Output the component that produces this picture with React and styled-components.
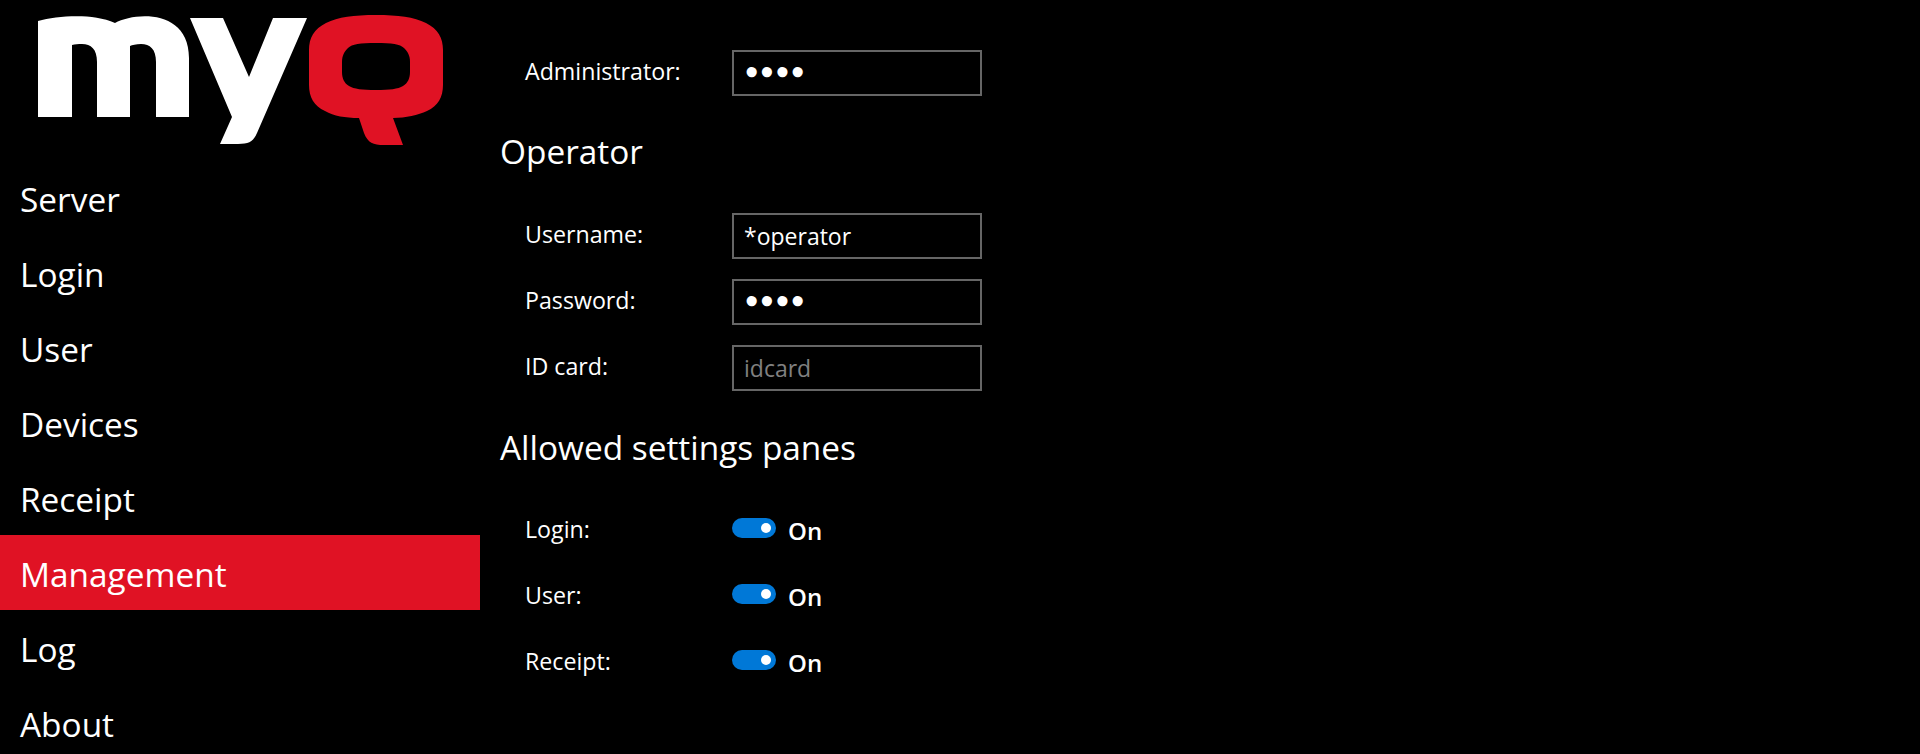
import styled, { createGlobalStyle } from "styled-components";

const GlobalStyle = createGlobalStyle`
  html, body {
    margin: 0;
    height: 100%;
    overflow: hidden;
    background: #000;
    color: #fff;
    font-family: "Open Sans", "Noto Sans", sans-serif;
  }
`;

const Page = styled.div`
  display: flex;
  width: 1920px;
  height: 754px;
  overflow: hidden;
  background: #000;
`;

const Sidebar = styled.aside`
  width: 480px;
  flex-shrink: 0;
`;

const LogoBox = styled.div`
  height: 160px;
`;

const NavItem = styled.div`
  box-sizing: border-box;
  height: 75px;
  padding: 3px 0 0 20px;
  display: flex;
  align-items: center;
  font-size: 33.4px;
  background: ${(p) => (p.$active ? "#e01224" : "transparent")};
`;

const Main = styled.main`
  flex: 1;
  padding: 50px 0 0 20px;
`;

const Heading = styled.h2`
  margin: 0;
  height: 52px;
  display: flex;
  align-items: center;
  font-size: 33.4px;
  font-weight: 400;
`;

const OperatorHeading = styled(Heading)`
  margin: 0 0 36px;
  padding-top: 9px;
`;

const PanesHeading = styled(Heading)`
  margin: 0 0 35px;
  padding-top: 10px;
`;

const Row = styled.div`
  display: grid;
  grid-template-columns: 207px 250px;
  height: 46px;
  margin-bottom: 20px;
  padding-left: 25px;
  align-items: center;
`;

const ToggleRow = styled(Row)`
  grid-template-columns: 207px auto;
`;

const Label = styled.label`
  font-size: 23.2px;
  margin-top: -4px;
`;

const Field = styled.input`
  box-sizing: border-box;
  width: 250px;
  height: 46px;
  padding: 0 10px;
  border: 2px solid #666;
  background: #000;
  color: #fff;
  font-family: inherit;
  font-size: 23px;
  outline: none;

  &[type="password"] {
    font-family: "DejaVu Sans", sans-serif;
    font-size: 26px;
    -webkit-text-stroke: 2.5px #fff;
  }

  &::placeholder {
    color: #808080;
    opacity: 1;
  }
`;

const ToggleWrap = styled.div`
  display: flex;
  align-items: center;
  gap: 12px;
`;

const Track = styled.span`
  position: relative;
  display: block;
  width: 44px;
  height: 20px;
  border-radius: 10px;
  background: #0078d7;
  margin-top: -6px;
`;

const Knob = styled.span`
  position: absolute;
  top: 5px;
  right: 5px;
  width: 10px;
  height: 10px;
  border-radius: 50%;
  background: #fff;
`;

const ToggleText = styled.span`
  font-size: 24px;
  font-weight: 600;
  margin-top: -1px;
`;

const navItems = ["Server", "Login", "User", "Devices", "Receipt", "Management", "Log", "About"];
const panes = ["Login", "User", "Receipt"];

const Logo = () => (
  <svg width="480" height="160" viewBox="0 0 480 160" style={{ display: "block" }}>
    <path
      fill="#fff"
      d="M38 21C58 16 92 13 115 23C135 12 189 9 189 58L189 117L156 117L156 62C156 49 150 44 141 44C136 44 132 45 130 46L130 117L97 117L97 62C97 49 91 44 82 44C78 44 75 44 72 45L72 117L38 117Z"
    />
    <path
      fill="#fff"
      d="M190 18L223 18L249 77L273 18L307 18L257 133C253 142 249 144 238 144L220 144L232 117Z"
    />
    <path
      fill="#e01224"
      fillRule="evenodd"
      d="M376 15C398 15 414 17 426 23C438 29 443 38 443 50L443 85C443 97 438 106 427 111C418 115 406 118 393 118L403 145L384 145C373 145 368 143 364 133L359 118C345 118 334 116 325 111C314 106 309 97 309 85L309 50C309 38 314 29 326 23C338 17 354 15 376 15ZM376 43C392 43 400 44 404 48C408 52 410 56 410 62L410 72C410 78 408 83 403 86C398 89 390 90 376 90C362 90 354 89 349 86C344 83 342 78 342 72L342 62C342 56 344 52 348 48C352 44 360 43 376 43Z"
    />
  </svg>
);

const Toggle = () => (
  <ToggleWrap>
    <Track>
      <Knob />
    </Track>
    <ToggleText>On</ToggleText>
  </ToggleWrap>
);

const App = () => {
  return (
    <Page>
      <GlobalStyle />
      <Sidebar>
        <LogoBox>
          <Logo />
        </LogoBox>
        {navItems.map((item) => (
          <NavItem key={item} $active={item === "Management"}>
            {item}
          </NavItem>
        ))}
      </Sidebar>
      <Main>
        <Row>
          <Label>Administrator:</Label>
          <Field type="password" defaultValue="abcd" readOnly />
        </Row>
        <OperatorHeading>Operator</OperatorHeading>
        <Row>
          <Label>Username:</Label>
          <Field type="text" defaultValue="*operator" readOnly />
        </Row>
        <Row>
          <Label>Password:</Label>
          <Field type="password" defaultValue="abcd" readOnly />
        </Row>
        <Row>
          <Label>ID card:</Label>
          <Field type="text" placeholder="idcard" readOnly />
        </Row>
        <PanesHeading>Allowed settings panes</PanesHeading>
        {panes.map((pane) => (
          <ToggleRow key={pane}>
            <Label>{pane}:</Label>
            <Toggle />
          </ToggleRow>
        ))}
      </Main>
    </Page>
  );
};

export default App;
